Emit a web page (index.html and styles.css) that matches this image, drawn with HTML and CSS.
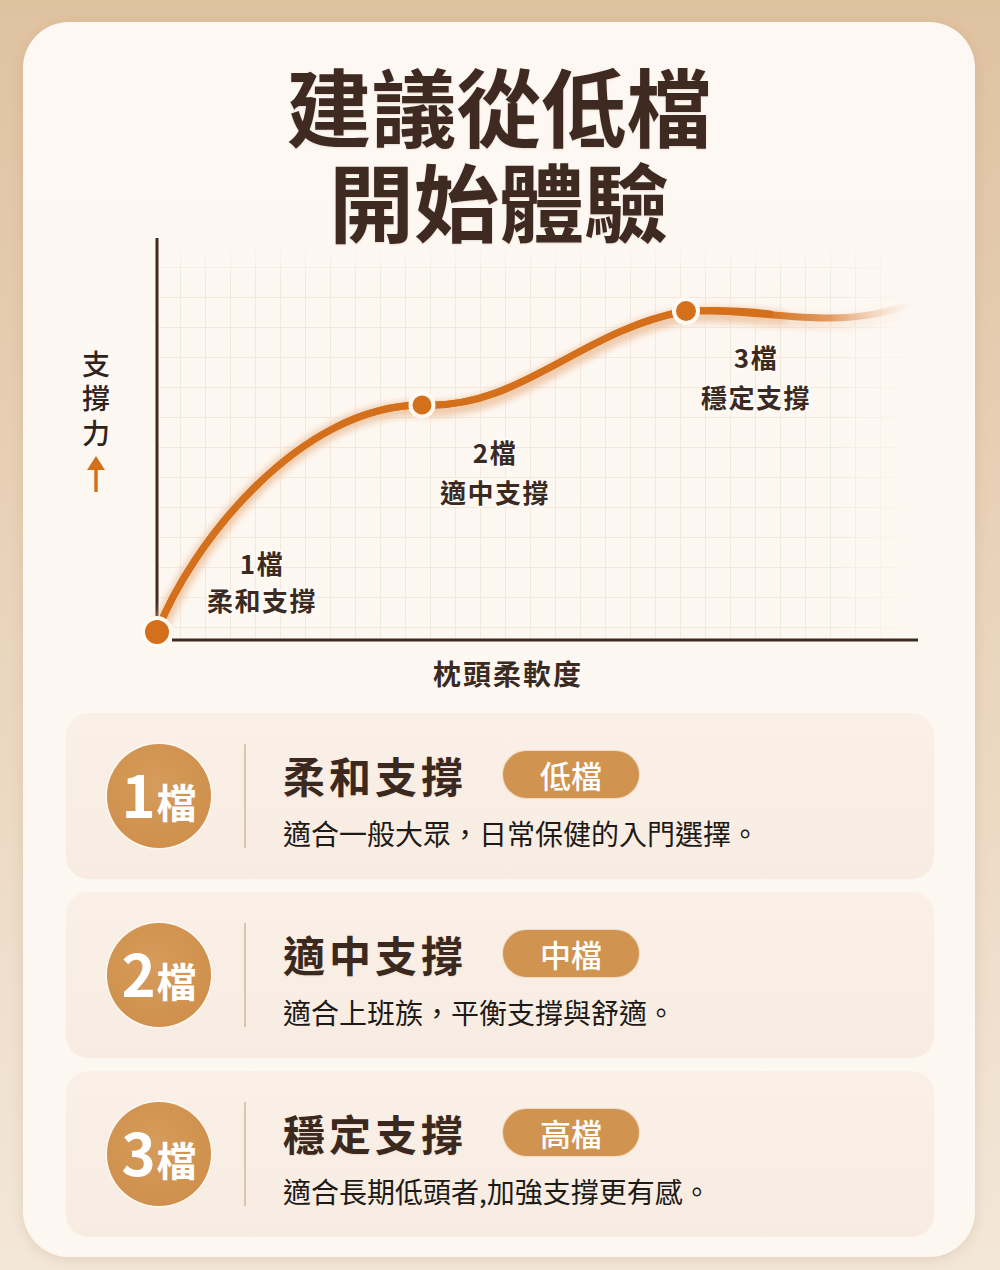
FILE: index.html
```html
<!DOCTYPE html>
<html lang="zh-Hant">
<head>
<meta charset="utf-8">
<title>建議從低檔開始體驗</title>
<link rel="stylesheet" href="styles.css">
</head>
<body>
<div class="page">
  <div class="card">
    <h1 class="title">建議從低檔<br>開始體驗</h1>

    <svg class="chart" viewBox="23 238 952 470" width="952" height="470" xmlns="http://www.w3.org/2000/svg">
      <defs>
        <pattern id="grid" x="5" y="27" width="25" height="30" patternUnits="userSpaceOnUse">
          <path d="M0 0.5 H25 M0.5 0 V30" stroke="#f4e8dd" stroke-width="1" fill="none"/>
        </pattern>
        <linearGradient id="fadeR" x1="0" y1="0" x2="1" y2="0">
          <stop offset="0" stop-color="#fff"/>
          <stop offset="0.88" stop-color="#fff"/>
          <stop offset="1" stop-color="#000"/>
        </linearGradient>
        <linearGradient id="fadeT" x1="0" y1="0" x2="0" y2="1">
          <stop offset="0" stop-color="#000"/>
          <stop offset="0.08" stop-color="#fff"/>
          <stop offset="1" stop-color="#fff"/>
        </linearGradient>
        <mask id="gridMaskR" maskUnits="userSpaceOnUse" x="158" y="245" width="760" height="393">
          <rect x="158" y="245" width="760" height="393" fill="url(#fadeR)"/>
        </mask>
        <mask id="gridMaskT" maskUnits="userSpaceOnUse" x="158" y="245" width="760" height="393">
          <rect x="158" y="245" width="760" height="393" fill="url(#fadeT)"/>
        </mask>
        <linearGradient id="curveGrad" gradientUnits="userSpaceOnUse" x1="760" y1="0" x2="912" y2="0">
          <stop offset="0" stop-color="#d4701b" stop-opacity="1"/>
          <stop offset="0.45" stop-color="#de8a4a" stop-opacity="0.85"/>
          <stop offset="1" stop-color="#f2c9a6" stop-opacity="0"/>
        </linearGradient>
        <linearGradient id="glowGrad" gradientUnits="userSpaceOnUse" x1="760" y1="0" x2="912" y2="0">
          <stop offset="0" stop-color="#e9b88e" stop-opacity="0.45"/>
          <stop offset="1" stop-color="#e9b88e" stop-opacity="0"/>
        </linearGradient>
        <filter id="blur" x="-10%" y="-30%" width="120%" height="160%">
          <feGaussianBlur stdDeviation="3.5"/>
        </filter>
      </defs>

      <g mask="url(#gridMaskT)">
        <rect x="158" y="245" width="760" height="393" fill="url(#grid)" mask="url(#gridMaskR)"/>
      </g>

      <!-- axes -->
      <line x1="157" y1="238" x2="157" y2="632" class="axis"/>
      <line x1="172" y1="640" x2="918" y2="640" class="axis"/>

      <!-- curve glow -->
      <path class="curve-glow" filter="url(#blur)" stroke="url(#glowGrad)"
        d="M157,636 C190,549 300,404 422,409 C520,414 580,334 686,315 C740,313 780,322 830,322 C865,322 885,316 910,309"/>
      <path class="curve-glow" filter="url(#blur)" stroke="#e9b88e" stroke-opacity="0.45"
        d="M157,636 C190,549 300,404 422,409 C520,414 580,334 686,315 C730,313 760,316 780,318"/>
      <!-- curve -->
      <path class="curve" stroke="url(#curveGrad)"
        d="M157,632 C190,545 300,405 422,405 C520,410 580,330 686,311 C740,309 780,318 830,318 C865,318 885,312 910,305"/>
      <path class="curve" stroke="#d4701b"
        d="M157,632 C190,545 300,405 422,405 C520,410 580,330 686,311 C730,309 755,312 770,314"/>

      <!-- dots -->
      <circle cx="157" cy="632" r="14" class="dot"/>
      <circle cx="422" cy="405" r="11.5" class="dot"/>
      <circle cx="686" cy="311" r="12" class="dot"/>

      <!-- labels -->
      <text x="262" y="574" class="lbl">1檔</text>
      <text x="262" y="611" class="lbl">柔和支撐</text>
      <text x="495" y="463" class="lbl">2檔</text>
      <text x="495" y="503" class="lbl">適中支撐</text>
      <text x="756" y="368" class="lbl">3檔</text>
      <text x="756" y="408" class="lbl">穩定支撐</text>

      <text x="508" y="685" class="axis-lbl">枕頭柔軟度</text>

      <text x="96" y="350" class="y-lbl">支撐力</text>
      <line x1="96" y1="468" x2="96" y2="492" class="arrow"/>
      <polygon points="96,456 87,470 105,470" class="arrow-head"/>
    </svg>

    <div class="levels">
      <div class="level">
        <div class="badge"><span class="badge-num">1</span><span class="badge-unit">檔</span></div>
        <div class="divider"></div>
        <div class="info">
          <div class="info-head">
            <h2 class="info-title">柔和支撐</h2>
            <span class="pill">低檔</span>
          </div>
          <p class="info-desc">適合一般大眾，日常保健的入門選擇。</p>
        </div>
      </div>
      <div class="level">
        <div class="badge"><span class="badge-num">2</span><span class="badge-unit">檔</span></div>
        <div class="divider"></div>
        <div class="info">
          <div class="info-head">
            <h2 class="info-title">適中支撐</h2>
            <span class="pill">中檔</span>
          </div>
          <p class="info-desc">適合上班族，平衡支撐與舒適。</p>
        </div>
      </div>
      <div class="level">
        <div class="badge"><span class="badge-num">3</span><span class="badge-unit">檔</span></div>
        <div class="divider"></div>
        <div class="info">
          <div class="info-head">
            <h2 class="info-title">穩定支撐</h2>
            <span class="pill">高檔</span>
          </div>
          <p class="info-desc">適合長期低頭者,加強支撐更有感。</p>
        </div>
      </div>
    </div>
  </div>
</div>
</body>
</html>
```

FILE: styles.css
```css
* { box-sizing: border-box; }

html, body {
  margin: 0;
  padding: 0;
}

body {
  width: 1000px;
  height: 1270px;
  background: linear-gradient(180deg, #dfc2a0 0%, #e9d3ba 45%, #f3e7d9 100%);
  font-family: "Noto Sans CJK TC", "Noto Sans", sans-serif;
  overflow: hidden;
}

.page {
  width: 1000px;
  height: 1270px;
  padding: 22px 25px 0 23px;
}

.card {
  width: 952px;
  height: 1235px;
  border-radius: 46px;
  background: linear-gradient(180deg, #fdf8f3 0%, #fdf7f1 100%);
  box-shadow: 0 3px 12px rgba(160, 115, 70, 0.18);
  overflow: hidden;
}

.title {
  margin: 0;
  height: 216px;
  padding-top: 34px;
  font-size: 85px;
  line-height: 95px;
  font-weight: 700;
  text-align: center;
  color: #3f2a21;
  text-shadow: 0 1px 2px rgba(120, 80, 50, 0.15);
}

.chart {
  display: block;
  width: 952px;
  height: 470px;
}

.axis {
  stroke: #3f2b22;
  stroke-width: 3;
}

.curve {
  fill: none;
  stroke-width: 7;
  stroke-linecap: round;
}

.curve-glow {
  fill: none;
  stroke-width: 14;
  stroke-linecap: round;
}

.dot {
  fill: #d4701b;
  stroke: #fffaf4;
  stroke-width: 4;
}

.lbl {
  font-family: "Noto Sans CJK TC", "Noto Sans", sans-serif;
  font-size: 26px;
  font-weight: 700;
  letter-spacing: 1.5px;
  fill: #3a2a22;
  text-anchor: middle;
  paint-order: stroke;
  stroke: #fffaf5;
  stroke-width: 4px;
  stroke-linejoin: round;
}

.axis-lbl {
  font-family: "Noto Sans CJK TC", "Noto Sans", sans-serif;
  font-size: 28px;
  font-weight: 700;
  letter-spacing: 2px;
  fill: #3a2a22;
  text-anchor: middle;
}

.y-lbl {
  font-family: "Noto Sans CJK TC", "Noto Sans", sans-serif;
  font-size: 28px;
  font-weight: 500;
  letter-spacing: 6.5px;
  fill: #2f231d;
  writing-mode: vertical-rl;
  text-orientation: upright;
}

.arrow {
  stroke: #d4701b;
  stroke-width: 3.5;
}

.arrow-head {
  fill: #d4701b;
}

.levels {
  margin-top: 5px;
  padding: 0 41px 0 43px;
  display: flex;
  flex-direction: column;
  gap: 13px;
}

.level {
  height: 166px;
  display: flex;
  align-items: center;
  padding-left: 41px;
  background: linear-gradient(180deg, #faf0e7 0%, #f8ece2 100%);
  border-radius: 22px;
}

.badge {
  flex: none;
  width: 104px;
  height: 104px;
  border-radius: 50%;
  background: radial-gradient(circle at 45% 40%, #d69c5a 0%, #cf914d 70%, #cc8d49 100%);
  box-shadow: 0 0 0 1.5px rgba(255, 250, 244, 0.8);
  display: flex;
  align-items: baseline;
  justify-content: center;
  padding-top: 14px;
  color: #ffffff;
  font-weight: 700;
}

.badge-num {
  font-size: 58px;
  line-height: 70px;
}

.badge-unit {
  font-size: 40px;
  line-height: 70px;
  margin-left: 1px;
}

.divider {
  flex: none;
  width: 2px;
  height: 104px;
  margin-left: 33px;
  background: #dcc4aa;
}

.info {
  margin-left: 37px;
  padding-top: 9px;
  display: flex;
  flex-direction: column;
}

.info-head {
  display: flex;
  align-items: center;
  height: 49px;
}

.info-title {
  margin: 0;
  font-size: 42px;
  line-height: 49px;
  letter-spacing: 4px;
  font-weight: 700;
  color: #3b2920;
  text-shadow: 0 1px 1px rgba(120, 80, 50, 0.12);
}

.pill {
  margin-left: 35px;
  width: 138px;
  height: 49px;
  border-radius: 25px;
  background: #d09450;
  border: 1px solid rgba(255, 250, 244, 0.7);
  color: #ffffff;
  font-size: 31px;
  font-weight: 500;
  display: flex;
  align-items: center;
  justify-content: center;
  line-height: 1;
}

.info-desc {
  margin: 16px 0 0;
  font-size: 28px;
  line-height: 36px;
  font-weight: 400;
  color: #1d1a17;
}
```
